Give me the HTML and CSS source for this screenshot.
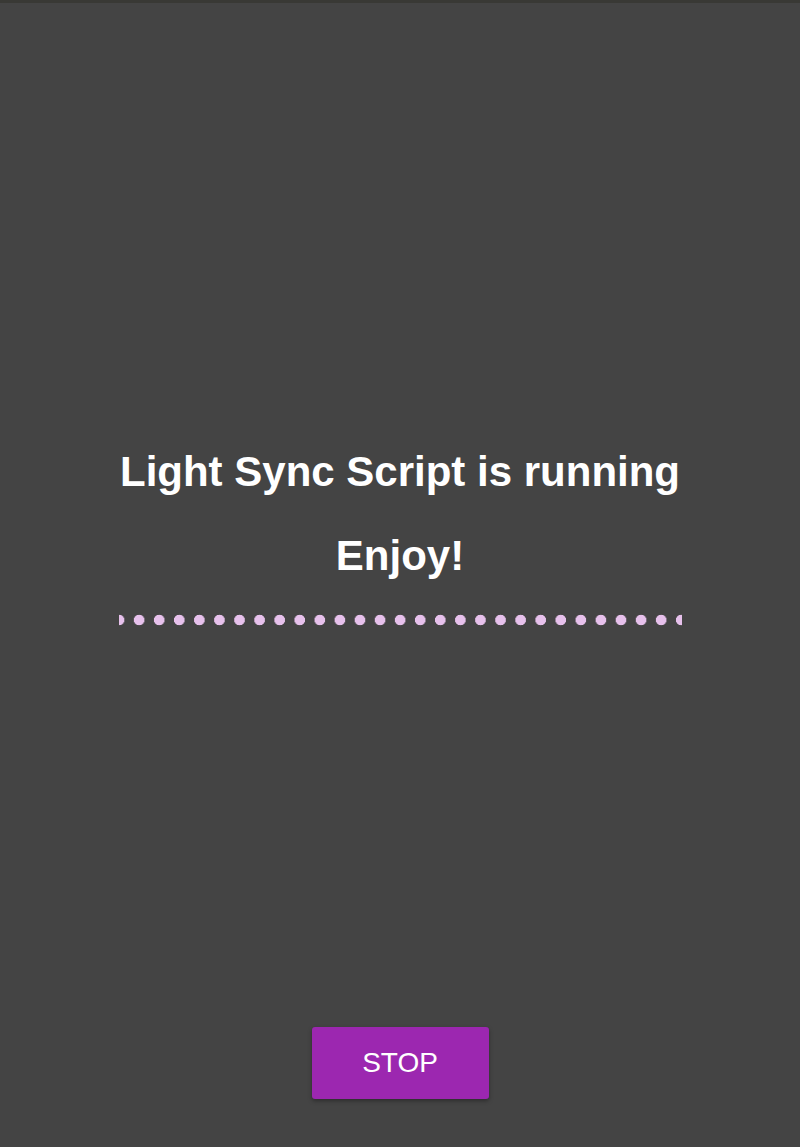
FILE: index.html
```html
<!DOCTYPE html>
<html>
<head>
<meta charset="utf-8">
<link rel="stylesheet" href="styles.css">
</head>
<body>
<div class="topbar"></div>
<main class="page">
  <section class="center">
    <h1 class="title">Light Sync Script is running</h1>
    <h2 class="subtitle">Enjoy!</h2>
    <div class="dots"></div>
  </section>
  <footer class="footer">
    <button class="stop">STOP</button>
  </footer>
</main>
</body>
</html>
```
FILE: styles.css
```css
html, body {
  margin: 0;
  padding: 0;
  height: 100%;
}
body {
  background: #444444;
  font-family: "Liberation Sans", Arial, sans-serif;
  color: #ffffff;
  display: flex;
  flex-direction: column;
}
.topbar {
  height: 3px;
  background: #393935;
  flex: none;
}
.page {
  flex: 1;
  display: flex;
  flex-direction: column;
  align-items: center;
}
.center {
  padding-top: 445px;
  display: flex;
  flex-direction: column;
  align-items: center;
}
.title {
  margin: 0;
  font-size: 42px;
  font-weight: bold;
  line-height: 48px;
}
.subtitle {
  margin: 36px 0 0 0;
  font-size: 42px;
  font-weight: bold;
  line-height: 48px;
}
.dots {
  margin-top: 34px;
  width: 563px;
  height: 12px;
  background-image: radial-gradient(circle, #e7c1ec 5px, transparent 5.6px);
  background-size: 20.08px 12px;
  background-position: -10px 0;
  background-repeat: repeat-x;
}
.footer {
  margin-top: auto;
  padding-bottom: 48px;
}
.stop {
  width: 177px;
  height: 72px;
  background: #9c27b0;
  color: #ffffff;
  border: none;
  border-radius: 3px;
  font-family: "Liberation Sans", Arial, sans-serif;
  font-size: 28px;
  box-shadow: 0 2px 4px rgba(0,0,0,0.35);
  padding: 0;
}
```
